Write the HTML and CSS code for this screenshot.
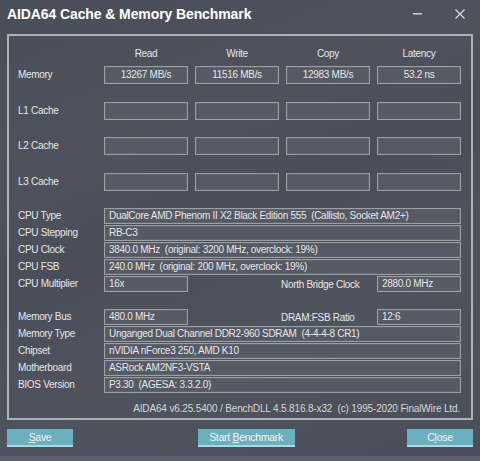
FILE: index.html
```html
<!DOCTYPE html>
<html>
<head>
<meta charset="utf-8">
<title>AIDA64 Cache & Memory Benchmark</title>
<link rel="stylesheet" href="styles.css">
</head>
<body>
<div class="window">
  <div class="titlebar">
    <span class="title">AIDA64 Cache &amp; Memory Benchmark</span>
    <div class="controls">
      <svg class="ctl min" width="10" height="10" viewBox="0 0 10 10"><rect x="0" y="4" width="9" height="1.6" fill="#c8cacd"/></svg>
      <svg class="ctl close" width="10" height="10" viewBox="0 0 10 10"><path d="M0.5 0.5 L9.5 9.5 M9.5 0.5 L0.5 9.5" stroke="#d8dadd" stroke-width="1.3" fill="none"/></svg>
    </div>
  </div>

  <div class="group">
    <div class="bench">
      <div class="brow head">
        <span></span><span class="hd">Read</span><span class="hd">Write</span><span class="hd">Copy</span><span class="hd">Latency</span>
      </div>
      <div class="brow first">
        <span class="lbl">Memory</span>
        <span class="box c">13267 MB/s</span><span class="box c">11516 MB/s</span><span class="box c">12983 MB/s</span><span class="box c">53.2 ns</span>
      </div>
      <div class="brow">
        <span class="lbl">L1 Cache</span>
        <span class="box"></span><span class="box"></span><span class="box"></span><span class="box"></span>
      </div>
      <div class="brow">
        <span class="lbl">L2 Cache</span>
        <span class="box"></span><span class="box"></span><span class="box"></span><span class="box"></span>
      </div>
      <div class="brow">
        <span class="lbl">L3 Cache</span>
        <span class="box"></span><span class="box"></span><span class="box"></span><span class="box"></span>
      </div>
    </div>

    <div class="info cpu">
      <div class="irow"><span class="lbl">CPU Type</span><span class="box wide">DualCore AMD Phenom II X2 Black Edition 555&nbsp; (Callisto, Socket AM2+)</span></div>
      <div class="irow"><span class="lbl">CPU Stepping</span><span class="box wide">RB-C3</span></div>
      <div class="irow"><span class="lbl">CPU Clock</span><span class="box wide">3840.0 MHz&nbsp; (original: 3200 MHz, overclock: 19%)</span></div>
      <div class="irow"><span class="lbl">CPU FSB</span><span class="box wide">240.0 MHz&nbsp; (original: 200 MHz, overclock: 19%)</span></div>
      <div class="irow"><span class="lbl">CPU Multiplier</span><span class="box">16x</span><span class="mid">North Bridge Clock</span><span class="box">2880.0 MHz</span></div>
    </div>

    <div class="info mem">
      <div class="irow"><span class="lbl">Memory Bus</span><span class="box">480.0 MHz</span><span class="mid">DRAM:FSB Ratio</span><span class="box">12:6</span></div>
      <div class="irow"><span class="lbl">Memory Type</span><span class="box wide">Unganged Dual Channel DDR2-960 SDRAM&nbsp; (4-4-4-8 CR1)</span></div>
      <div class="irow"><span class="lbl">Chipset</span><span class="box wide">nVIDIA nForce3 250, AMD K10</span></div>
      <div class="irow"><span class="lbl">Motherboard</span><span class="box wide">ASRock AM2NF3-VSTA</span></div>
      <div class="irow"><span class="lbl">BIOS Version</span><span class="box wide">P3.30&nbsp; (AGESA: 3.3.2.0)</span></div>
    </div>

    <div class="footer">AIDA64 v6.25.5400 / BenchDLL 4.5.816.8-x32&nbsp; (c) 1995-2020 FinalWire Ltd.</div>
  </div>

  <div class="buttons">
    <button class="btn small"><u>S</u>ave</button>
    <button class="btn big">Start <u>B</u>enchmark</button>
    <button class="btn small">C<u>l</u>ose</button>
  </div>
  <div class="strip"></div>
</div>
</body>
</html>
```

FILE: styles.css
```css
html, body {
  margin: 0;
  padding: 0;
}
body {
  width: 480px;
  height: 461px;
  overflow: hidden;
  background: #4a4e58;
  font-family: "Liberation Sans", Arial, sans-serif;
  font-size: 10px;
  letter-spacing: -0.3px;
  color: #e6e7e9;
}
.window {
  width: 480px;
  height: 461px;
  display: flex;
  flex-direction: column;
  background:
    linear-gradient(160deg, rgba(255,255,255,0) 0%, rgba(255,255,255,0.025) 30%, rgba(255,255,255,0) 45%, rgba(255,255,255,0.03) 70%, rgba(255,255,255,0) 100%),
    #4a4e58;
}
.titlebar {
  height: 34px;
  display: flex;
  align-items: flex-start;
  justify-content: space-between;
  box-sizing: border-box;
  padding: 6px 0 0 7px;
}
.title {
  font-weight: bold;
  font-size: 14px;
  line-height: 16px;
  letter-spacing: -0.1px;
  color: #ffffff;
}
.controls {
  display: flex;
  gap: 32px;
  padding-right: 15px;
  padding-top: 3px;
}
.ctl { display: block; }
.group {
  margin: 0 7px;
  border: 2px solid #adb0b4;
  padding: 0 10px 2px 9px;
}
.bench {
  padding-top: 11px;
}
.brow {
  display: grid;
  grid-template-columns: 79px repeat(4, 84px);
  column-gap: 7px;
  height: 18px;
  align-items: center;
  margin-top: 17.5px;
}
.brow.head {
  margin-top: 0;
  height: 14px;
}
.brow.first {
  margin-top: 5px;
}
.hd {
  text-align: center;
  line-height: 14px;
}
.lbl {
  line-height: 14px;
}
.box {
  box-sizing: border-box;
  height: 18px;
  border: 1px solid #9c9fa4;
  box-shadow: inset 0 0 0 1px #5e626b;
  background: #565a64;
  line-height: 16px;
  padding-left: 4px;
  white-space: nowrap;
  overflow: hidden;
}
.box.c {
  text-align: center;
  padding-left: 0;
}
.info {
  margin-top: 17.5px;
  display: flex;
  flex-direction: column;
  gap: 1px;
}
.info.mem {
  margin-top: 17px;
}
.irow {
  display: grid;
  grid-template-columns: 86px 84px 7px 84px 7px 84px 7px 84px;
  height: 16px;
  align-items: center;
}
.irow .box {
  height: 16px;
  line-height: 14px;
}
.irow .box.wide {
  grid-column: 2 / 9;
}
.irow .mid {
  grid-column: 3 / 8;
  padding-left: 93px;
}
.irow .box:last-child:not(.wide) {
  grid-column: 8;
}
.footer {
  margin-top: 9px;
  height: 14px;
  line-height: 14px;
  text-align: right;
  padding-right: 1px;
  letter-spacing: -0.15px;
  color: #d6d7d9;
}
.buttons {
  display: flex;
  justify-content: space-between;
  align-items: flex-start;
  margin: 9px 7px 0 7px;
  height: 18px;
}
.btn {
  box-sizing: border-box;
  height: 18px;
  border: none;
  border-bottom: 2px solid #a5dbe6;
  background: #6cafbf;
  color: #f4f6f7;
  font-family: "Liberation Sans", Arial, sans-serif;
  font-size: 10.5px;
  letter-spacing: -0.3px;
  line-height: 16px;
  padding: 0;
  margin: 0;
}
.btn.small { width: 66px; }
.btn.big { width: 97px; margin-left: 12px; }
.strip {
  margin-top: auto;
  height: 5px;
  background: #5a606d;
}
```
